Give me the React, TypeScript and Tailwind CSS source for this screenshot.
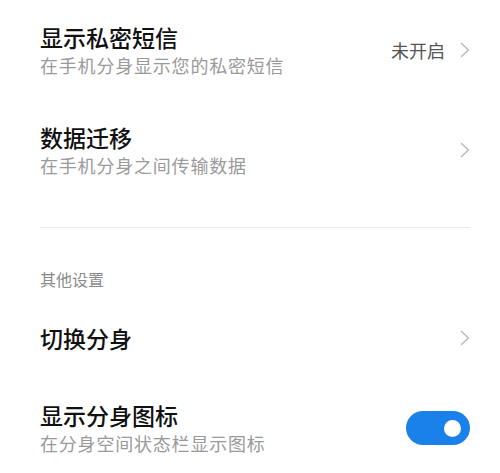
import React from "react";

const FONT = "font-['Noto_Sans_CJK_SC','Noto_Sans',sans-serif]";

function Chevron() {
  return (
    <svg width="10" height="16" viewBox="0 0 10 16" fill="none" className="shrink-0">
      <path d="M1.5 1.5 L8.5 8 L1.5 14.5" stroke="#b8b8b8" strokeWidth="1.4" strokeLinecap="round" strokeLinejoin="round" />
    </svg>
  );
}

function Toggle({ on }: { on: boolean }) {
  return (
    <div className={`w-[64px] h-[34px] rounded-full flex items-center px-[9px] shrink-0 ${on ? "bg-[#1a80ea] justify-end" : "bg-[#e5e5e5] justify-start"}`}>
      <div className="w-[17px] h-[17px] rounded-full bg-white" />
    </div>
  );
}

function Row({ title, sub, right, className = "" }: { title: string; sub?: string; right: React.ReactNode; className?: string }) {
  return (
    <div className={`flex items-center justify-between ${className}`}>
      <div className="flex flex-col">
        <span className="text-[23px] leading-[30px] font-medium text-[#111]">{title}</span>
        {sub && <span className="text-[18px] leading-[26px] tracking-[0.8px] text-[#9a9a9a]">{sub}</span>}
      </div>
      {right}
    </div>
  );
}

export default function App() {
  return (
    <div className={`w-[500px] h-[473px] bg-white overflow-hidden pl-10 pr-[30px] pt-[22px] ${FONT}`}>
      <Row
        title="显示私密短信"
        sub="在手机分身显示您的私密短信"
        right={
          <div className="flex items-center gap-[15px]">
            <span className="text-[18px] text-[#555]">未开启</span>
            <Chevron />
          </div>
        }
      />
      <Row className="mt-[44px]" title="数据迁移" sub="在手机分身之间传输数据" right={<Chevron />} />
      <div className="mt-[49px] h-px bg-[#ececec]" />
      <div className="mt-[39px] text-[16px] leading-[24px] text-[#8a8a8a]">其他设置</div>
      <Row className="mt-[32px]" title="切换分身" right={<Chevron />} />
      <Row className="mt-[47px]" title="显示分身图标" sub="在分身空间状态栏显示图标" right={<Toggle on />} />
    </div>
  );
}
